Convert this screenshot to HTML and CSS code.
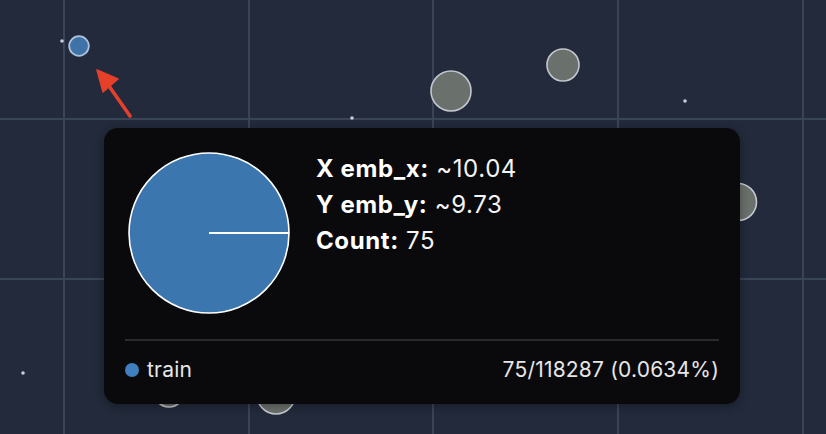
FILE: index.html
```html
<!DOCTYPE html>
<html>
<head>
<meta charset="utf-8">
<link rel="stylesheet" href="styles.css">
</head>
<body>
<div class="canvas">
  <svg class="plot" width="826" height="434" viewBox="0 0 826 434">
    <g class="grid">
      <line x1="64" y1="0" x2="64" y2="434"/>
      <line x1="249" y1="0" x2="249" y2="434"/>
      <line x1="433" y1="0" x2="433" y2="434"/>
      <line x1="618" y1="0" x2="618" y2="434"/>
      <line x1="803" y1="0" x2="803" y2="434"/>
      <line x1="0" y1="119" x2="826" y2="119"/>
      <line x1="0" y1="279" x2="826" y2="279"/>
    </g>
    <g class="dots">
      <circle cx="62" cy="41" r="1.8"/>
      <circle cx="685" cy="101" r="1.8"/>
      <circle cx="352" cy="118" r="1.8"/>
      <circle cx="23" cy="373" r="1.8"/>
    </g>
    <g class="bubbles">
      <circle cx="451" cy="91" r="20"/>
      <circle cx="563" cy="65" r="16"/>
      <circle cx="738" cy="202" r="18.5"/>
      <circle cx="169" cy="392" r="15"/>
      <circle cx="276" cy="395" r="19"/>
    </g>
    <circle class="selected" cx="79" cy="46" r="9.8"/>
    <g class="arrow">
      <line x1="130" y1="116" x2="109" y2="86"/>
      <polygon points="97,70 118,79 103,92"/>
    </g>
  </svg>

  <div class="tooltip">
    <div class="main">
      <svg class="pie" width="162" height="162" viewBox="0 0 162 162">
        <circle cx="81" cy="81" r="80" class="pie-fill"/>
        <line x1="81" y1="81" x2="161" y2="81" class="pie-edge"/>
      </svg>
      <div class="stats">
        <div class="stat"><b>X emb_x:</b> ~10.04</div>
        <div class="stat"><b>Y emb_y:</b> ~9.73</div>
        <div class="stat"><b>Count:</b> 75</div>
      </div>
    </div>
    <div class="divider"></div>
    <div class="footer">
      <div class="legend"><span class="swatch"></span><span>train</span></div>
      <div class="ratio">75/118287 (0.0634%)</div>
    </div>
  </div>
</div>
</body>
</html>
```

FILE: styles.css
```css
html, body {
  margin: 0;
  padding: 0;
  background: #222a3b;
}
.canvas {
  position: relative;
  width: 826px;
  height: 434px;
  overflow: hidden;
  background: #222a3b;
  font-family: Inter, "Liberation Sans", sans-serif;
}
.plot {
  position: absolute;
  left: 0;
  top: 0;
  display: block;
}
.grid line {
  stroke: #3a4457;
  stroke-width: 2;
}
.dots circle {
  fill: #c9cdd6;
}
.bubbles circle {
  fill: #6a706c;
  stroke: #c3c7cf;
  stroke-width: 1.6;
}
.selected {
  fill: #3f72a6;
  stroke: #aac2da;
  stroke-width: 1.8;
}
.arrow line {
  stroke: #e5402a;
  stroke-width: 3.6;
  stroke-linecap: round;
}
.arrow polygon {
  fill: #e5402a;
  stroke: #e5402a;
  stroke-width: 1.5;
  stroke-linejoin: round;
}
.tooltip {
  position: absolute;
  left: 104px;
  top: 128px;
  width: 636px;
  height: 276px;
  box-sizing: border-box;
  padding: 24px 21px 0 21px;
  background: #0a0a0c;
  border-radius: 14px;
  box-shadow: 0 2px 10px rgba(0, 0, 0, 0.35);
  color: #f2f2f2;
}
.main {
  display: flex;
  align-items: flex-start;
  gap: 26px;
  padding-left: 3px;
}
.pie {
  display: block;
  flex: none;
}
.pie-fill {
  fill: #3c76ae;
  stroke: #ffffff;
  stroke-width: 1.6;
}
.pie-edge {
  stroke: #ffffff;
  stroke-width: 2;
}
.stats {
  margin-top: -1px;
  display: flex;
  flex-direction: column;
}
.stat {
  font-size: 24px;
  line-height: 36px;
  letter-spacing: 0.6px;
  color: #f4f4f4;
  white-space: nowrap;
}
.stat b {
  font-weight: 700;
  color: #ffffff;
}
.divider {
  margin-top: 25px;
  height: 1.5px;
  background: #2b2b2f;
}
.footer {
  display: flex;
  justify-content: space-between;
  align-items: center;
  height: 58px;
  font-size: 21px;
  letter-spacing: 0.2px;
  color: #e6e6e6;
}
.legend {
  display: flex;
  align-items: center;
  gap: 8px;
}
.swatch {
  width: 14px;
  height: 14px;
  border-radius: 50%;
  background: #3f7fc0;
  flex: none;
}
.ratio {
  white-space: nowrap;
}
```
